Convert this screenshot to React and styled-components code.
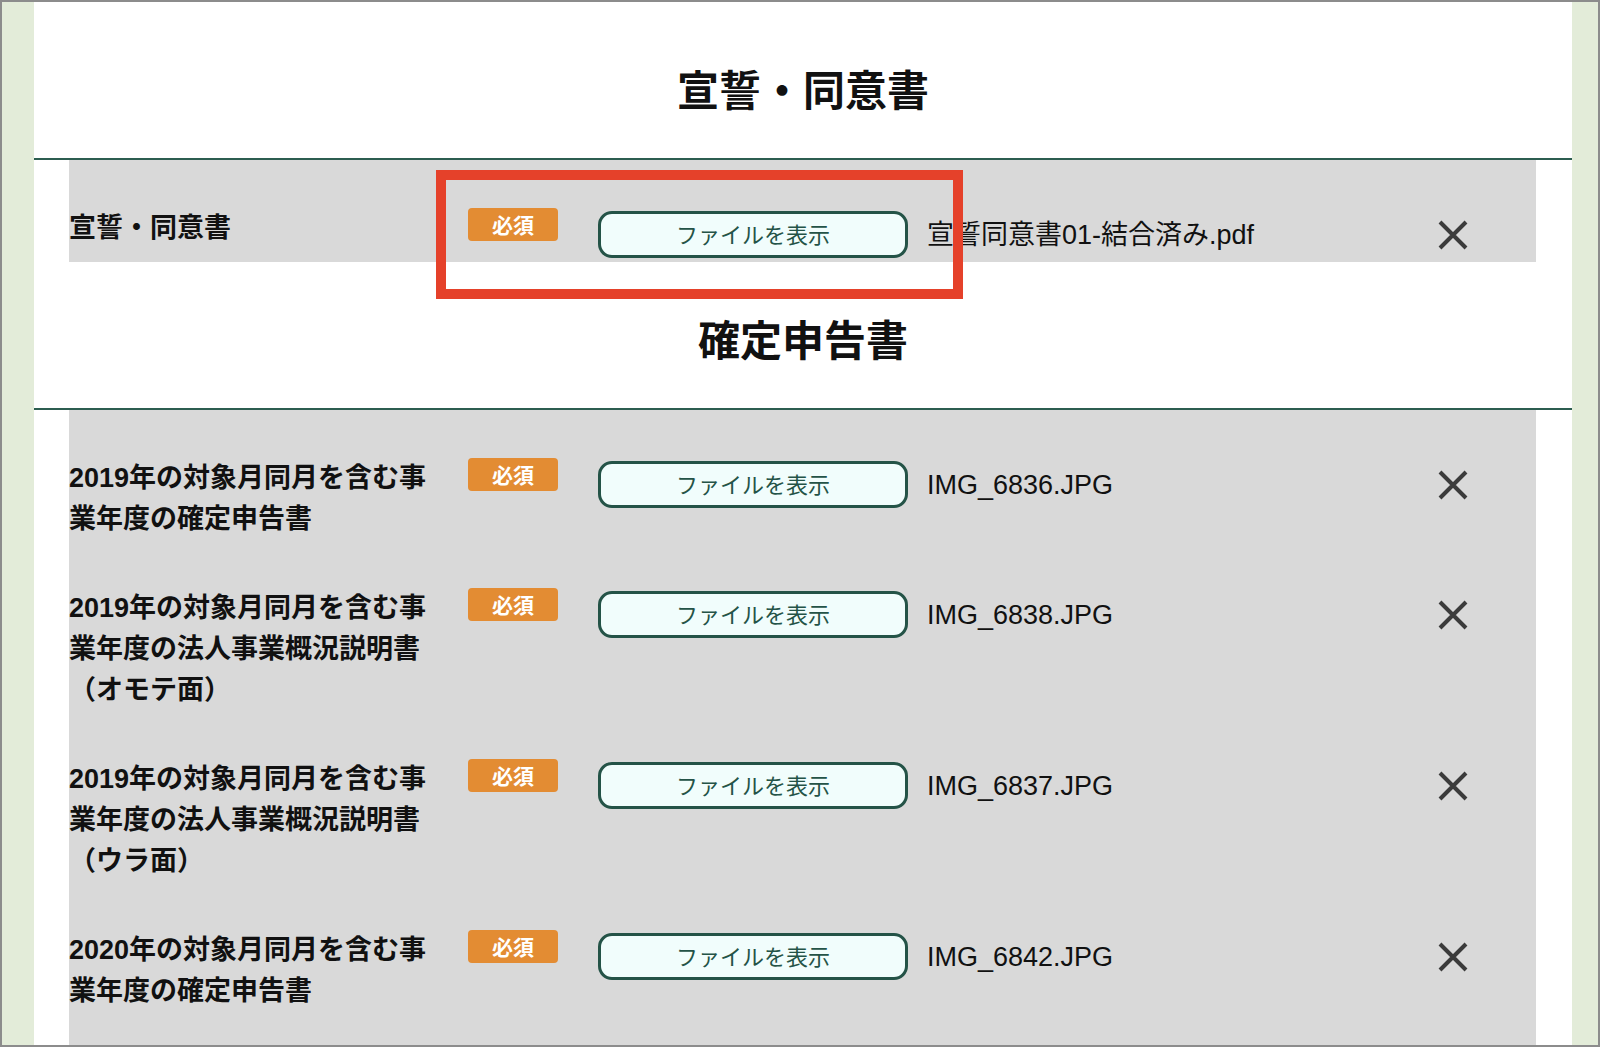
import React from 'react'
import styled, { createGlobalStyle } from 'styled-components'

const GlobalStyle = createGlobalStyle`
    html, body {
        margin: 0;
        padding: 0;
    }
    body {
        font-family: "Liberation Sans", "Noto Sans CJK JP", sans-serif;
        color: #111;
    }
`

const Frame = styled.div`
    box-sizing: border-box;
    width: 1600px;
    height: 1047px;
    border: 2px solid #8c8c8c;
    background-color: #e3ecd9;
    padding: 0 26px 0 32px;
    overflow: hidden;
`

const Content = styled.div`
    position: relative;
    height: 100%;
    background-color: #fff;
`

const SectionHeader = styled.div`
    padding: ${props => props.first ? '66px' : '56px'} 0 42px;
    border-bottom: 2px solid #2c5d50;
`

const SectionTitle = styled.h2`
    margin: 0;
    text-align: center;
    font-size: 42px;
    line-height: 48px;
    font-weight: 700;
    color: #111;
`

const List = styled.div`
    margin: 0 36px 0 35px;
    padding-bottom: ${props => props.fill ? '200px' : '4px'};
    background-color: #d9d9d9;
`

const Row = styled.div`
    display: flex;
    align-items: flex-start;
    padding-top: 48px;
`

const Label = styled.div`
    width: 365px;
    margin-right: 34px;
    font-size: 27px;
    line-height: 41px;
    font-weight: 700;
    color: #111;
`

const Badge = styled.span`
    display: flex;
    align-items: center;
    justify-content: center;
    width: 90px;
    height: 33px;
    margin-right: 40px;
    padding-bottom: 2px;
    box-sizing: border-box;
    border-radius: 4px;
    background-color: #e38c33;
    color: #fff;
    font-size: 21px;
    font-weight: 700;
`

const ViewButton = styled.button`
    box-sizing: border-box;
    width: 310px;
    height: 47px;
    margin-top: 3px;
    border: 3px solid #245347;
    border-radius: 14px;
    background-color: #f1fdfc;
    color: #245347;
    font-family: "Noto Sans CJK JP", sans-serif;
    font-size: 22px;
    padding: 0 0 4px;
    cursor: pointer;
`

const FileName = styled.div`
    flex: 1;
    margin: 7px 0 0 19px;
    font-size: 27px;
    line-height: 41px;
    color: #111;
`

const RemoveButton = styled.button`
    display: flex;
    margin: 12px 68px 0 0;
    padding: 0;
    border: none;
    background: none;
    cursor: pointer;
`

const Highlight = styled.div`
    position: absolute;
    left: 402px;
    top: 168px;
    width: 527px;
    height: 129px;
    box-sizing: border-box;
    border: 10px solid #e5412a;
    pointer-events: none;
`

const CloseIcon = () => (
    <svg width="30" height="30" viewBox="0 0 30 30">
        <path d="M2 2 L28 28 M28 2 L2 28" stroke="#3b3b3b" strokeWidth="4" fill="none" />
    </svg>
)

const sections = [
    {
        title: '宣誓・同意書',
        items: [
            { label: '宣誓・同意書', file: '宣誓同意書01-結合済み.pdf' },
        ],
    },
    {
        title: '確定申告書',
        items: [
            { label: '2019年の対象月同月を含む事業年度の確定申告書', file: 'IMG_6836.JPG' },
            { label: '2019年の対象月同月を含む事業年度の法人事業概況説明書（オモテ面）', file: 'IMG_6838.JPG' },
            { label: '2019年の対象月同月を含む事業年度の法人事業概況説明書（ウラ面）', file: 'IMG_6837.JPG' },
            { label: '2020年の対象月同月を含む事業年度の確定申告書', file: 'IMG_6842.JPG' },
        ],
    },
]

const App = () => (
    <>
        <GlobalStyle />
        <Frame>
            <Content>
                {sections.map((section, i) => (
                    <section key={section.title}>
                        <SectionHeader first={i === 0}>
                            <SectionTitle>{section.title}</SectionTitle>
                        </SectionHeader>
                        <List fill={i === sections.length - 1}>
                            {section.items.map(item => (
                                <Row key={item.file}>
                                    <Label>{item.label}</Label>
                                    <Badge>必須</Badge>
                                    <ViewButton type="button">ファイルを表示</ViewButton>
                                    <FileName>{item.file}</FileName>
                                    <RemoveButton type="button" aria-label="削除">
                                        <CloseIcon />
                                    </RemoveButton>
                                </Row>
                            ))}
                        </List>
                    </section>
                ))}
                <Highlight />
            </Content>
        </Frame>
    </>
)

export default App
